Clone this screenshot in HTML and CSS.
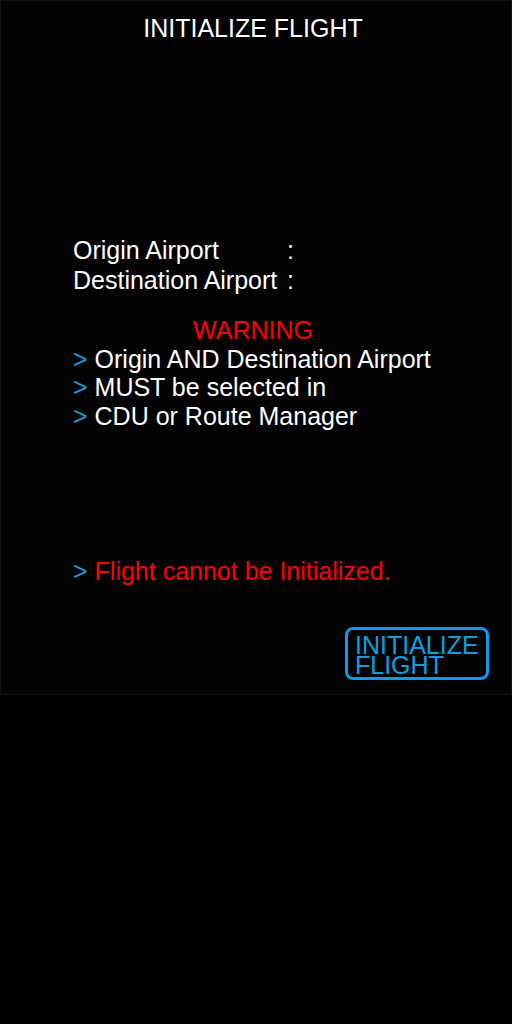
FILE: index.html
```html
<!DOCTYPE html>
<html>
<head>
<meta charset="utf-8">
<link rel="stylesheet" href="styles.css">
</head>
<body>
<div class="panel">
  <div class="title">INITIALIZE FLIGHT</div>
  <div class="fields">
    <div class="field"><span class="label">Origin Airport</span><span>:</span></div>
    <div class="field"><span class="label">Destination Airport</span><span>:</span></div>
  </div>
  <div class="warning">
    <div class="warn-title">WARNING</div>
    <div class="line"><span class="chev">&gt;</span> Origin AND Destination Airport</div>
    <div class="line"><span class="chev">&gt;</span> MUST be selected in</div>
    <div class="line"><span class="chev">&gt;</span> CDU or Route Manager</div>
  </div>
  <div class="status"><span class="chev">&gt;</span> <span class="red">Flight cannot be Initialized.</span></div>
  <div class="actions">
    <button class="btn">INITIALIZE<br>FLIGHT</button>
  </div>
</div>
</body>
</html>
```

FILE: styles.css
```css
html, body {
  margin: 0;
  padding: 0;
  background: #000;
}
body {
  width: 512px;
  height: 1024px;
  font-family: "Liberation Sans", Arial, sans-serif;
  color: #fff;
}
.panel {
  box-sizing: border-box;
  width: 512px;
  height: 695px;
  border: 1px solid #111;
  background: #030303;
  display: flex;
  flex-direction: column;
}
.title {
  text-align: center;
  font-size: 25px;
  line-height: 26px;
  margin-top: 14px;
  padding-right: 6px;
}
.fields {
  margin-top: 194px;
  padding-left: 72px;
  font-size: 25px;
  line-height: 30px;
}
.field {
  display: flex;
}
.label {
  width: 214px;
}
.warning {
  margin-top: 21px;
  padding-left: 72px;
  font-size: 25px;
  line-height: 28.5px;
}
.warn-title {
  color: #f00;
  text-align: center;
  width: 360px;
}
.chev {
  color: #1a9ad6;
}
.status {
  margin-top: 127px;
  padding-left: 72px;
  font-size: 25px;
  line-height: 28px;
}
.red {
  color: #f00;
}
.actions {
  display: flex;
  justify-content: flex-end;
  padding-right: 22px;
  margin-top: 42px;
}
.btn {
  box-sizing: border-box;
  width: 144px;
  height: 53px;
  border: 3px solid #0a9af0;
  border-radius: 8px;
  background: transparent;
  color: #0ba0e0;
  font-family: "Liberation Sans", Arial, sans-serif;
  font-size: 25px;
  line-height: 20px;
  text-align: left;
  padding: 5px 0 0 7px;
  margin: 0;
  display: flex;
  flex-direction: column;
  justify-content: flex-start;
}
```
